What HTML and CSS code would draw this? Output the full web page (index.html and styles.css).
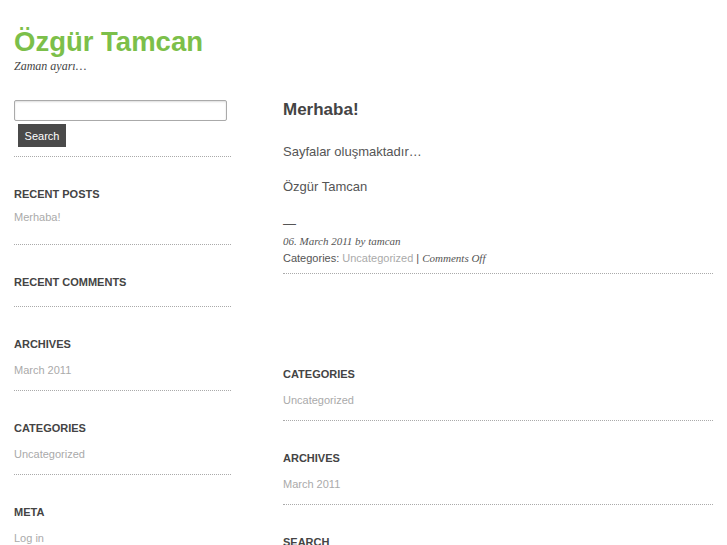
FILE: index.html
```html
<!DOCTYPE html>
<html lang="en">
<head>
    <meta charset="UTF-8">
    <title>Özgür Tamcan</title>
    <link rel="stylesheet" href="styles.css">
</head>
<body>
    <div class="page">
        <!-- Header -->
        <div class="header">
            <h1 class="site-title">Özgür Tamcan</h1>
            <div class="tagline">Zaman ayarı…</div>
        </div>

        <div class="columns">
            <!-- Sidebar -->
            <div class="sidebar">
                <div class="widget search-widget">
                    <input type="text" class="search-input">
                    <button class="search-button">Search</button>
                </div>
                <div class="widget widget-posts">
                    <h3>Recent Posts</h3>
                    <ul><li><a href="#">Merhaba!</a></li></ul>
                </div>
                <div class="widget widget-empty">
                    <h3>Recent Comments</h3>
                </div>
                <div class="widget">
                    <h3>Archives</h3>
                    <ul><li><a href="#">March 2011</a></li></ul>
                </div>
                <div class="widget">
                    <h3>Categories</h3>
                    <ul><li><a href="#">Uncategorized</a></li></ul>
                </div>
                <div class="widget">
                    <h3>Meta</h3>
                    <ul><li><a href="#">Log in</a></li></ul>
                </div>
            </div>

            <!-- Main content -->
            <div class="main">
                <div class="post">
                    <h2 class="post-title">Merhaba!</h2>
                    <p>Sayfalar oluşmaktadır…</p>
                    <p>Özgür Tamcan</p>
                    <p class="dash">—</p>
                    <div class="post-date">06. March 2011 by tamcan</div>
                    <div class="post-meta">Categories: <a href="#">Uncategorized</a> | <em>Comments Off</em></div>
                </div>
                <div class="widget first-main-widget">
                    <h3>Categories</h3>
                    <ul><li><a href="#">Uncategorized</a></li></ul>
                </div>
                <div class="widget">
                    <h3>Archives</h3>
                    <ul><li><a href="#">March 2011</a></li></ul>
                </div>
                <div class="widget">
                    <h3>Search</h3>
                </div>
            </div>
        </div>
    </div>
</body>
</html>
```

FILE: styles.css
```css
body {
    margin: 0;
    padding: 0;
    background-color: #fff;
    font-family: "Liberation Sans", Arial, sans-serif;
    color: #555;
}
a {
    color: #aaa;
    text-decoration: none;
}
.page {
    padding: 0 14px;
}
.header {
    padding-top: 26px;
}
.site-title {
    margin: 0;
    font-size: 27.5px;
    line-height: 32px;
    color: #7cbf4a;
}
.tagline {
    font-family: "Liberation Serif", "Times New Roman", serif;
    font-style: italic;
    font-size: 12px;
    line-height: 17px;
    color: #444;
}
.columns {
    display: flex;
    gap: 52px;
    padding-top: 25px;
}
.sidebar {
    width: 217px;
}
.main {
    width: 430px;
}
.widget {
    padding: 29px 0 12px;
    border-bottom: 1px dotted #aaa;
}
.widget h3 {
    margin: 0 0 10px;
    font-size: 11px;
    line-height: 16px;
    text-transform: uppercase;
    color: #444;
}
.widget ul {
    list-style: none;
    margin: 0;
    padding: 0;
}
.widget li {
    font-size: 11px;
    line-height: 16px;
}
.widget-posts {
    padding-bottom: 19px;
}
.widget-posts h3 {
    margin-bottom: 7px;
}
.widget-empty {
    padding-bottom: 16px;
}
.widget-empty h3 {
    margin: 0;
}
.search-widget {
    padding: 0 0 9px;
}
.search-input {
    display: block;
    box-sizing: border-box;
    width: 213px;
    height: 21px;
    margin: 0;
    border: 1px solid #aaa;
    border-radius: 2px;
    box-shadow: inset 0 1px 2px #ddd;
}
.search-button {
    display: block;
    margin: 3px 0 0 4px;
    width: 48px;
    height: 23px;
    padding: 0;
    border: none;
    background-color: #4a4a4a;
    color: #fff;
    font-family: "Liberation Sans", Arial, sans-serif;
    font-size: 11px;
}
.post {
    padding-bottom: 6px;
    border-bottom: 1px dotted #aaa;
}
.post-title {
    margin: 0 0 23px;
    font-size: 17px;
    line-height: 20px;
    color: #444;
}
.post p {
    margin: 0 0 17px;
    font-size: 13px;
    line-height: 18px;
}
.post p.dash {
    margin: 19px 0 0;
}
.post-date {
    font-family: "Liberation Serif", "Times New Roman", serif;
    font-style: italic;
    font-size: 11px;
    line-height: 17px;
    color: #555;
}
.post-meta {
    font-size: 11px;
    line-height: 17px;
}
.post-meta em {
    font-family: "Liberation Serif", "Times New Roman", serif;
}
.first-main-widget {
    padding-top: 92px;
}
.main .widget:last-child {
    border-bottom: none;
}
```
